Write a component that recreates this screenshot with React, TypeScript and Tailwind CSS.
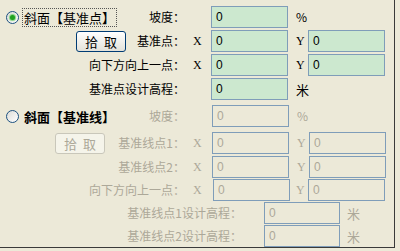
import React from 'react';

const dis = 'text-[#aca899]';

function Radio({ checked }: { checked?: boolean }) {
  return (
    <div className="w-[13px] h-[13px] rounded-full border border-[#1c5180] bg-gradient-to-br from-[#dcdcd7] to-white flex items-center justify-center shrink-0">
      {checked && <div className="w-[5px] h-[5px] rounded-full bg-[#21a121] shadow-[0_0_1px_1px_#7ed37e]"></div>}
    </div>
  );
}

function Field({ disabled, className = 'w-[77px]' }: { disabled?: boolean; className?: string }) {
  return (
    <div
      className={`h-[22px] shrink-0 border border-[#7f9db9] flex items-center pl-[4px] text-[12px] font-['Liberation_Sans',sans-serif] ${
        disabled ? 'bg-[#ece9d8] text-[#aca899]' : 'bg-[#cce8cf] text-black'
      } ${className}`}
    >
      0
    </div>
  );
}

function Axis({ children, disabled }: { children: React.ReactNode; disabled?: boolean }) {
  return (
    <div className={`font-['Liberation_Serif',serif] text-[12px] ${disabled ? dis : 'text-black'}`}>{children}</div>
  );
}

export default function App() {
  return (
    <div className="w-[400px] h-[251px] bg-[#ece9d8] font-['Noto_Sans_CJK_SC',sans-serif] text-[12px] text-black leading-none overflow-hidden">
      <div className="w-[395px] h-[248px] border-r border-b border-[#3a3a3a] flex flex-col">
        <div className="h-px ml-[130px] bg-[#3a3a3a]"></div>

        {/* 斜面【基准点】 */}
        <div className="flex h-[22px] items-center mt-[6px]">
          <div className="w-[188px] flex items-center h-full">
            <div className="ml-[6px]"><Radio checked /></div>
            <span className="ml-[3px] h-[19px] px-[1px] flex items-center border border-dotted border-[#555] text-[13px]">斜面【基准点】</span>
            <span className="ml-auto pr-[3px]">坡度：</span>
          </div>
          <div className="w-[23px]"></div>
          <Field />
          <div className="w-[20px] pl-[8px]">%</div>
        </div>

        <div className="flex h-[22px] items-center mt-[2px]">
          <div className="w-[188px] flex items-center h-full">
            <button className="ml-[76px] w-[50px] h-[21px] rounded-[3px] border border-[#003c74] bg-gradient-to-b from-white to-[#e3e2da] text-[13px] text-black flex items-center justify-center">拾&nbsp;&nbsp;取</button>
            <span className="ml-auto pr-[3px]">基准点：</span>
          </div>
          <div className="w-[23px] pl-[5px]"><Axis>X</Axis></div>
          <Field />
          <div className="w-[20px] pl-[8px]"><Axis>Y</Axis></div>
          <Field />
        </div>

        <div className="flex h-[22px] items-center mt-[2px]">
          <div className="w-[188px] flex justify-end pr-[3px]">向下方向上一点：</div>
          <div className="w-[23px] pl-[5px]"><Axis>X</Axis></div>
          <Field />
          <div className="w-[20px] pl-[8px]"><Axis>Y</Axis></div>
          <Field />
        </div>

        <div className="flex h-[22px] items-center mt-[2px]">
          <div className="w-[188px] flex justify-end pr-[3px]">基准点设计高程：</div>
          <div className="w-[23px]"></div>
          <Field />
          <div className="w-[20px] pl-[8px] text-[13px]">米</div>
        </div>

        {/* 斜面【基准线】 */}
        <div className="flex h-[22px] items-center mt-[5px]">
          <div className="w-[188px] flex items-center h-full">
            <div className="ml-[6px]"><Radio /></div>
            <span className="ml-[4px] px-[1px] text-[13px] font-semibold">斜面【基准线】</span>
            <span className={`ml-auto pr-[3px] ${dis}`}>坡度：</span>
          </div>
          <div className="w-[24px]"></div>
          <Field disabled />
          <div className={`w-[20px] pl-[8px] ${dis}`}>%</div>
        </div>

        <div className="flex h-[22px] items-center mt-[5px]">
          <div className="w-[188px] flex items-center h-full">
            <button disabled className="ml-[55px] w-[50px] h-[21px] rounded-[3px] border border-[#c9c7ba] bg-[#f5f4ea] text-[13px] text-[#aca899] flex items-center justify-center">拾&nbsp;&nbsp;取</button>
            <span className={`ml-auto pr-[3px] ${dis}`}>基准线点1：</span>
          </div>
          <div className="w-[24px] pl-[5px]"><Axis disabled>X</Axis></div>
          <Field disabled />
          <div className="w-[20px] pl-[8px]"><Axis disabled>Y</Axis></div>
          <Field disabled />
        </div>

        <div className="flex h-[22px] items-center mt-[2px]">
          <div className={`w-[188px] flex justify-end pr-[3px] ${dis}`}>基准线点2：</div>
          <div className="w-[24px] pl-[5px]"><Axis disabled>X</Axis></div>
          <Field disabled />
          <div className="w-[20px] pl-[8px]"><Axis disabled>Y</Axis></div>
          <Field disabled />
        </div>

        <div className="flex h-[22px] items-center mt-[1px]">
          <div className={`w-[188px] flex justify-end pr-[3px] ${dis}`}>向下方向上一点：</div>
          <div className="w-[25px] pl-[5px]"><Axis disabled>X</Axis></div>
          <Field disabled />
          <div className="w-[18px] pl-[6px]"><Axis disabled>Y</Axis></div>
          <Field disabled />
        </div>

        <div className="flex h-[22px] items-center mt-[1px]">
          <div className={`w-[264px] flex justify-end pr-[22px] ${dis}`}>基准线点1设计高程：</div>
          <Field disabled className="w-[76px]" />
          <div className={`pl-[7px] text-[13px] ${dis}`}>米</div>
        </div>

        <div className="flex h-[22px] items-center mt-[1px]">
          <div className={`w-[264px] flex justify-end pr-[22px] ${dis}`}>基准线点2设计高程：</div>
          <Field disabled className="w-[76px]" />
          <div className={`pl-[7px] text-[13px] ${dis}`}>米</div>
        </div>
      </div>
    </div>
  );
}
